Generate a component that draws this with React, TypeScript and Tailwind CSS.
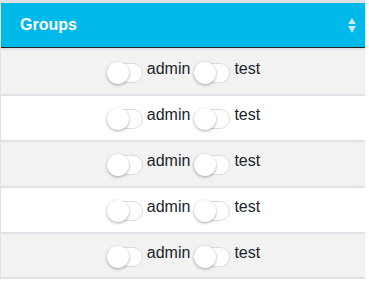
import { useState } from 'react';

type Row = { id: number; admin: boolean; test: boolean };

const initialRows: Row[] = [1, 2, 3, 4, 5].map((id) => ({ id, admin: false, test: false }));

function Toggle({ checked, onChange }: { checked: boolean; onChange: () => void }) {
  return (
    <button
      type="button"
      role="switch"
      aria-checked={checked}
      onClick={onChange}
      className="relative mt-[4px] h-[20px] w-[36px] shrink-0 rounded-full border border-[#dcdcdc] bg-white"
    >
      <span
        className={
          checked
            ? 'absolute left-[13px] top-[-2px] h-[22px] w-[22px] rounded-full bg-white shadow-[0_1px_3px_rgba(0,0,0,0.35)]'
            : 'absolute left-[-1px] top-[-2px] h-[22px] w-[22px] rounded-full bg-white shadow-[0_1px_3px_rgba(0,0,0,0.35)]'
        }
      />
    </button>
  );
}

export default function App() {
  const [rows, setRows] = useState(initialRows);

  const flip = (id: number, key: 'admin' | 'test') =>
    setRows((prev) => prev.map((r) => (r.id === id ? { ...r, [key]: !r[key] } : r)));

  return (
    <div className="h-[281px] w-[369px] overflow-hidden bg-white font-['Liberation_Sans',Arial,sans-serif]">
      <div className="w-[365px] border-l border-t-[3px] border-[#dee2e6]">
        <div className="flex h-[45px] items-center justify-between border-b border-[#222] bg-[#00b9eb] pl-[19px] pr-[9px]">
          <span className="text-[16px] font-bold text-white">Groups</span>
          <svg width="8" height="15" viewBox="0 0 8 15" className="mt-[1px]">
            <path d="M4 0 L8 6 L0 6 Z" fill="#c4ebf8" />
            <path d="M4 15 L8 8 L0 8 Z" fill="#c4ebf8" />
          </svg>
        </div>
        {rows.map((r, i) => (
          <div
            key={r.id}
            className={
              i % 2 === 0
                ? 'flex h-[46px] items-start justify-center border-t-2 border-[#dee2e6] bg-[#f2f2f2] pt-[9px] first:border-t-0 first:pt-[10px] last:h-[47px] last:border-b-2'
                : 'flex h-[46px] items-start justify-center border-t-2 border-[#dee2e6] bg-white pt-[9px]'
            }
          >
            <div className="ml-[1px] flex items-start text-[16px] leading-[20px] text-[#212529]">
              <Toggle checked={r.admin} onChange={() => flip(r.id, 'admin')} />
              <span className="ml-[4px] mr-[4px]">admin</span>
              <Toggle checked={r.test} onChange={() => flip(r.id, 'test')} />
              <span className="ml-[4px]">test</span>
            </div>
          </div>
        ))}
      </div>
    </div>
  );
}
